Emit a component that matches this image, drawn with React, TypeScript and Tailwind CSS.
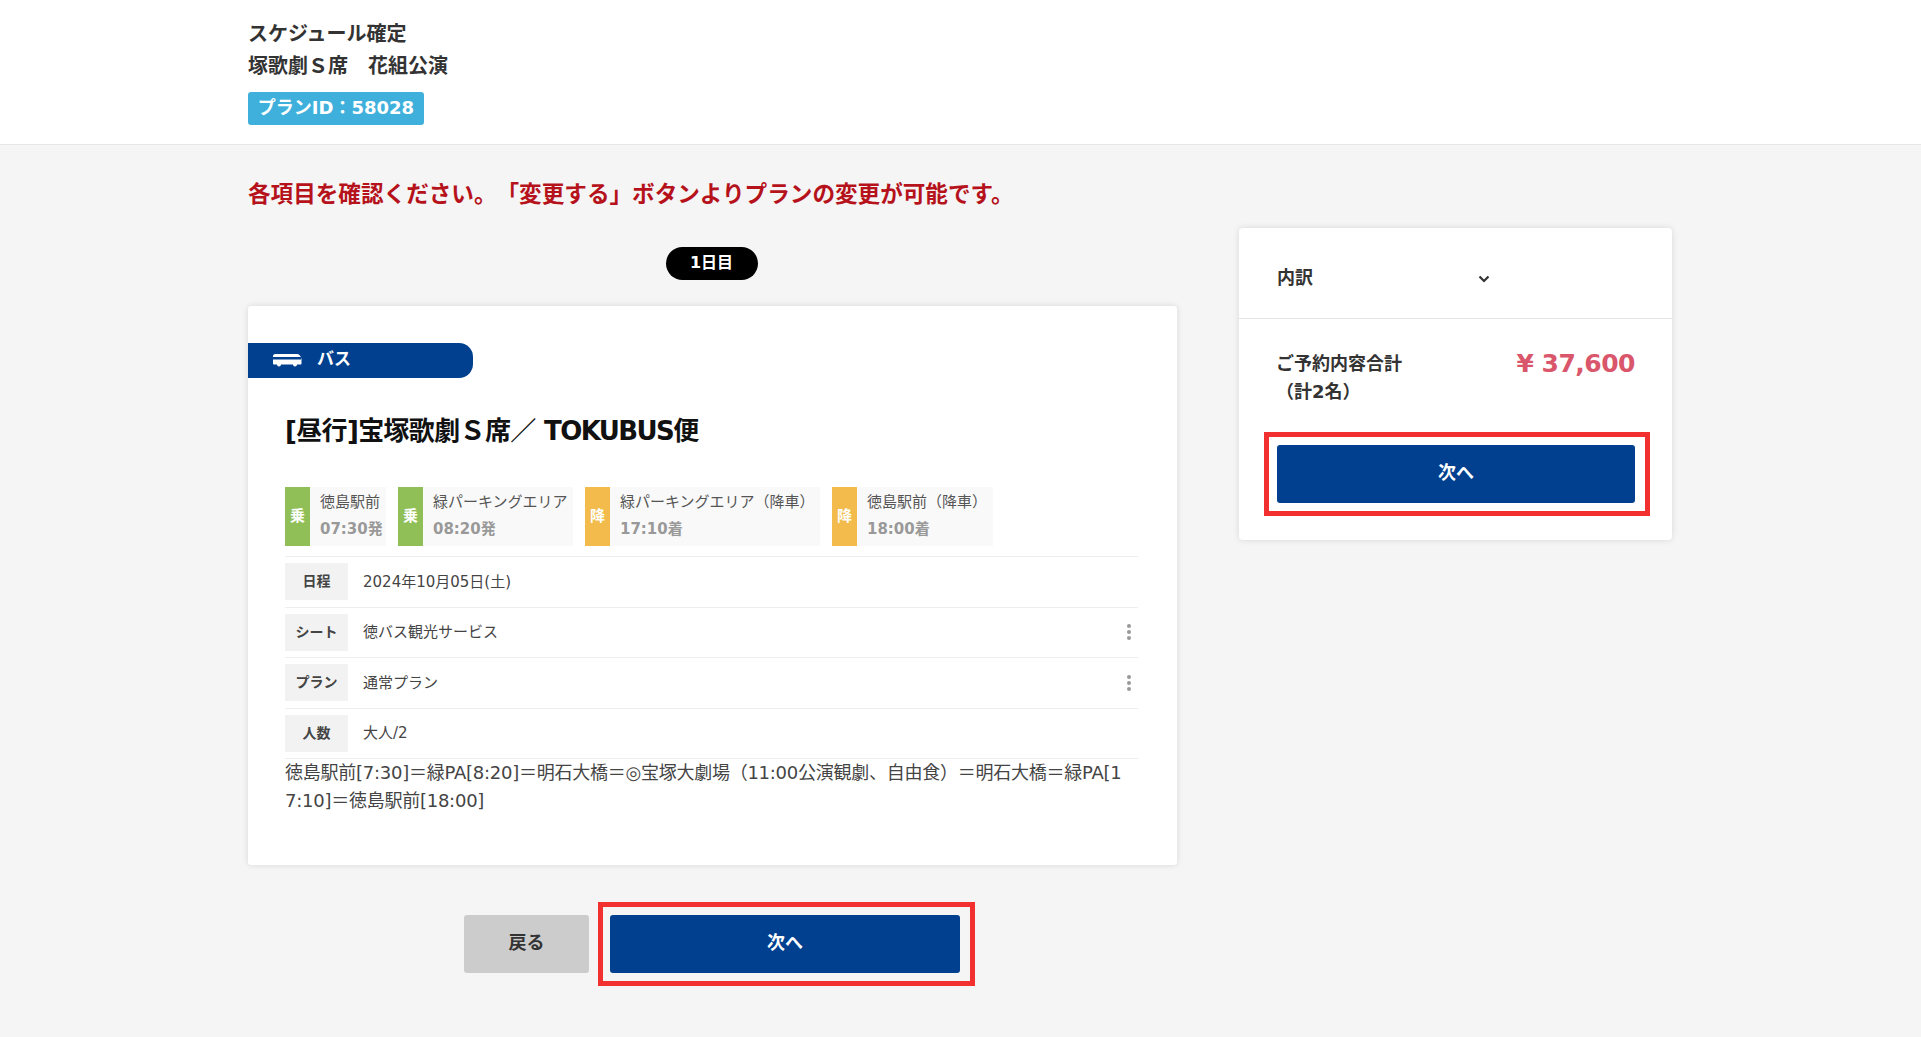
import React from "react";

const font = { fontFamily: '"DejaVu Sans", "Noto Sans CJK JP", sans-serif' };

function BusIcon() {
  return (
    <svg width="29" height="14" viewBox="0 0 29 14" fill="none">
      <path d="M2 1h22c2 0 4 2 4.500 5v4.500c0 .5-.5 1-1 1H1c-.5 0-1-.5-1-1V3c0-1 1-2 2-2z" fill="#fff" />
      <rect x="0" y="4" width="25" height="2.500" fill="#00408f" />
      <rect x="25" y="4" width="3" height="2.500" fill="#00408f" />
      <circle cx="6" cy="11.500" r="2" fill="#fff" />
      <circle cx="22" cy="11.500" r="2" fill="#fff" />
    </svg>
  );
}

function Stop({ kind, name, time, w, color }: { kind: string; name: string; time: string; w: string; color: string }) {
  return (
    <div className={`flex h-[59px] bg-[#f9f9f9] ${w}`}>
      <div className={`flex w-[25px] shrink-0 items-center justify-center text-[15px] font-bold text-white ${color}`}>{kind}</div>
      <div className="pl-[10px] pt-[2px]">
        <div className="whitespace-nowrap text-[15px] leading-[27px] text-[#555]">{name}</div>
        <div className="whitespace-nowrap text-[15px] font-bold leading-[26px] text-[#999]">{time}</div>
      </div>
    </div>
  );
}

function Row({ label, value, dots }: { label: string; value: string; dots?: boolean }) {
  return (
    <div className="flex h-[50.500px] items-center border-b border-[#eeeeee]">
      <div className="flex h-[37px] w-[63px] shrink-0 items-center justify-center bg-[#f2f2f2] text-[14px] font-bold text-[#444]">{label}</div>
      <div className="ml-[15px] flex-1 text-[15px] text-[#444]">{value}</div>
      {dots && (
        <div className="mr-[7px] flex flex-col gap-[2px]">
          <span className="h-[4px] w-[4px] rounded-full bg-[#999]" />
          <span className="h-[4px] w-[4px] rounded-full bg-[#999]" />
          <span className="h-[4px] w-[4px] rounded-full bg-[#999]" />
        </div>
      )}
    </div>
  );
}

function NextButton({ className }: { className: string }) {
  return (
    <div className={`flex h-[58px] items-center justify-center rounded-[3px] bg-[#00408f] pb-[4px] text-[18px] font-bold text-white ${className}`}>次へ</div>
  );
}

export default function App() {
  return (
    <div style={font} className="min-h-screen bg-[#f5f5f5] text-[#333] [text-spacing-trim:space-all]">
      <header className="h-[145px] border-b border-[#e6e6e6] bg-white pl-[248px] pt-[18px]">
        <div className="text-[20px] font-bold leading-[32px] text-[#333]">スケジュール確定</div>
        <div className="text-[20px] font-bold leading-[32px] text-[#333]">塚歌劇Ｓ席　花組公演</div>
        <div className="mt-[10px] flex h-[33px] w-[176px] items-center justify-center rounded-[3px] bg-[#3fb0dc] pb-[2px] text-[18px] font-bold text-white">プランID：58028</div>
      </header>

      <div className="flex gap-[62px] pl-[248px]">
        <main className="w-[929px]">
          <h1 className="mt-[32px] h-[34px] whitespace-nowrap text-[22.600px] font-bold leading-[34px] text-[#b5121b]">各項目を確認ください。「変更する」ボタンよりプランの変更が可能です。</h1>
          <div className="mt-[36px] flex justify-center pr-[2px]">
            <div className="flex h-[33px] w-[92px] items-center justify-center rounded-full bg-black pb-[2px] text-[16px] font-bold text-white">1日目</div>
          </div>
          <section className="mt-[26px] h-[559px] rounded-[3px] bg-white pt-[37px] shadow-[0_0_6px_rgba(0,0,0,0.12)]">
            <div className="flex h-[35px] w-[225px] items-center gap-[15px] rounded-r-[14px] bg-[#00408f] pb-[2px] pl-[25px] text-[17px] font-bold text-white">
              <BusIcon />
              <span>バス</span>
            </div>
            <div className="pl-[37px] pr-[39px]">
              <h2 className="mt-[34px] whitespace-nowrap text-[26px] font-bold leading-[38px] tracking-[-0.65px] text-[#111]">[昼行]宝塚歌劇Ｓ席／ <span className="tracking-[-1.6px]">TOKUBUS</span>便</h2>
              <div className="mt-[37px] flex gap-[12px] border-b border-[#eeeeee] pb-[10px]">
                <Stop kind="乗" name="徳島駅前" time="07:30発" w="w-[101px]" color="bg-[#8fbf56]" />
                <Stop kind="乗" name="緑パーキングエリア" time="08:20発" w="w-[175px]" color="bg-[#8fbf56]" />
                <Stop kind="降" name="緑パーキングエリア（降車）" time="17:10着" w="w-[235px]" color="bg-[#f2bb4b]" />
                <Stop kind="降" name="徳島駅前（降車）" time="18:00着" w="w-[161px]" color="bg-[#f2bb4b]" />
              </div>
              <Row label="日程" value="2024年10月05日(土)" />
              <Row label="シート" value="徳バス観光サービス" dots />
              <Row label="プラン" value="通常プラン" dots />
              <Row label="人数" value="大人/2" />
              <p className="max-w-[846px] break-all text-[18px] leading-[28px] tracking-[-0.25px] text-[#444]">徳島駅前[7:30]＝緑PA[8:20]＝明石大橋＝◎宝塚大劇場（11:00公演観劇、自由食）＝明石大橋＝緑PA[17:10]＝徳島駅前[18:00]</p>
            </div>
          </section>
          <div className="mt-[37px] flex items-center pl-[216px]">
            <div className="flex h-[58px] w-[125px] items-center justify-center rounded-[3px] bg-[#cccccc] pb-[4px] text-[18px] font-bold text-[#333]">戻る</div>
            <div className="ml-[9px] w-[377px] border-[5px] border-[#f23030] px-[7px] py-[8px]">
              <NextButton className="w-[350px]" />
            </div>
          </div>
        </main>

        <aside className="mt-[83px] h-[312px] w-[433px] rounded-[4px] bg-white shadow-[0_0_6px_rgba(0,0,0,0.12)]">
          <div className="relative flex h-[91px] items-center border-b border-[#e5e5e5] pl-[38px] pt-[8px] text-[18px] font-bold text-[#333]">
            内訳
            <svg className="absolute left-[239px] top-[47px]" width="12" height="8" viewBox="0 0 12 8" fill="none">
              <path d="M1.500 1.500L6 6l4.500-4.500" stroke="#333" strokeWidth="2.200" />
            </svg>
          </div>
          <div className="flex justify-between pl-[37px] pr-[37px] pt-[31px]">
            <div className="text-[18px] font-bold leading-[28px] text-[#333]">
              <div>ご予約内容合計</div>
              <div>（計2名）</div>
            </div>
            <div className="text-[25px] font-bold leading-[28px] tracking-[-0.5px] text-[#d9566b]">¥ 37,600</div>
          </div>
          <div className="ml-[25px] mt-[26px] w-[386px] border-[5px] border-[#f23030] px-[8px] py-[8px]">
            <NextButton className="w-[358px]" />
          </div>
        </aside>
      </div>
    </div>
  );
}
